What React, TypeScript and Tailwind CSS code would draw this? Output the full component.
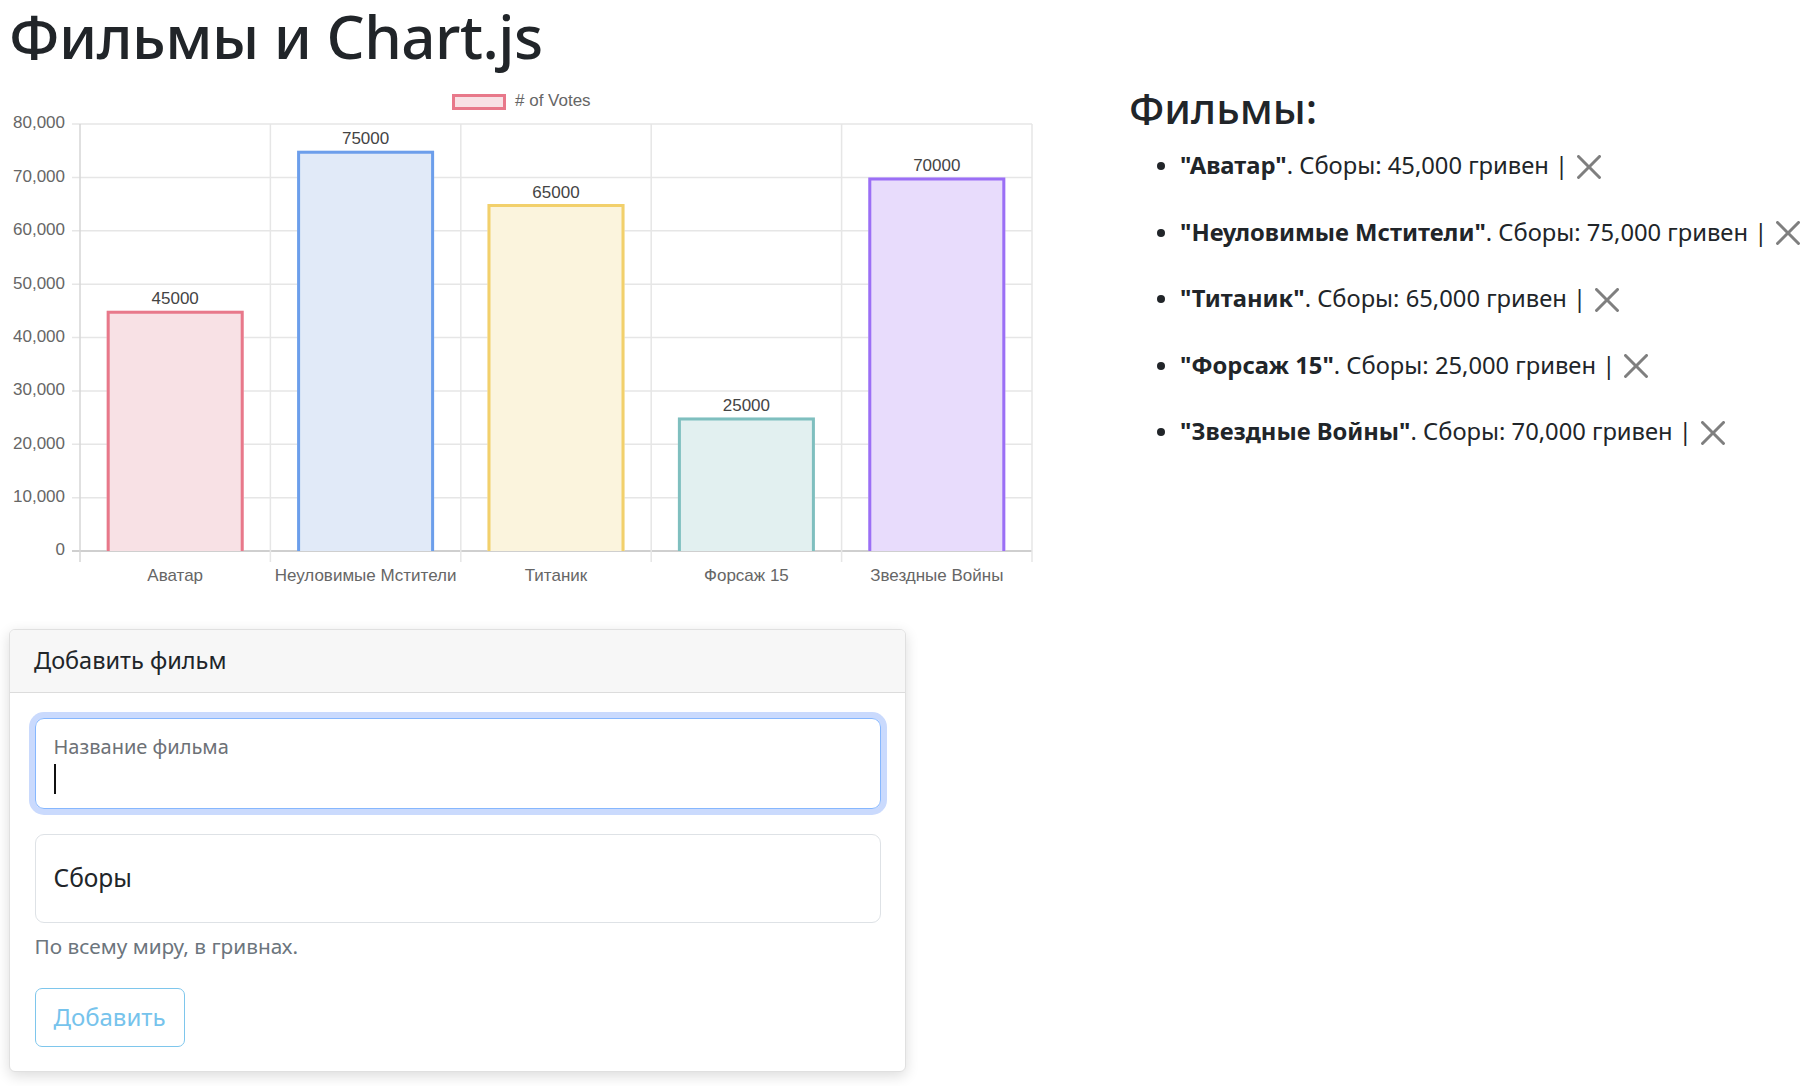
import React from "react";

const SANS = '"Noto Sans", "Open Sans", sans-serif';
const CHART_FONT = '"Liberation Sans", Arial, sans-serif';

const labels = ["Аватар", "Неуловимые Мстители", "Титаник", "Форсаж 15", "Звездные Войны"];
const values = [45000, 75000, 65000, 25000, 70000];
const borders = ["#e8788a", "#6c9eeb", "#f2d06b", "#7fbfbf", "#9b6ff5"];
const fills = ["#f8e1e5", "#e1eaf8", "#fbf4dd", "#e2f0f0", "#e8dcfc"];

function Chart() {
  const l = 80, r = 1032, t = 44, b = 471;
  const cat = (r - l) / 5;
  const step = (b - t) / 8;
  const barW = 137;
  return (
    <svg width={1040} height={520} viewBox="0 0 1040 520" className="block" style={{ fontFamily: CHART_FONT }}>
      {/* legend */}
      <rect x={453.5} y={15.5} width={51} height={13} fill={fills[0]} stroke={borders[0]} strokeWidth={3} />
      <text x={515} y={22} fontSize={17} fill="#666" dominantBaseline="middle">
        # of Votes
      </text>
      {/* horizontal grid */}
      {Array.from({ length: 9 }).map((_, k) => {
        const y = t + k * step;
        return (
          <g key={k}>
            <line x1={72} x2={r} y1={y} y2={y} stroke={k === 8 ? "#cfcfcf" : "#e6e6e6"} strokeWidth={k === 8 ? 2 : 1.5} />
            <text x={65} y={y} fontSize={17} fill="#666" textAnchor="end" dominantBaseline="middle">
              {k === 8 ? "0" : `${(8 - k) * 10},000`}
            </text>
          </g>
        );
      })}
      {/* vertical grid */}
      {Array.from({ length: 6 }).map((_, i) => {
        const x = l + i * cat;
        return <line key={i} x1={x} x2={x} y1={t} y2={b + 11} stroke={i === 0 ? "#d6d6d6" : "#e6e6e6"} strokeWidth={1.5} />;
      })}
      {/* bars */}
      {values.map((v, i) => {
        const cx = l + cat * (i + 0.5);
        const x0 = cx - barW / 2;
        const x1 = cx + barW / 2;
        const top = b - (v / 80000) * (b - t);
        return (
          <g key={i}>
            <rect x={x0} y={top} width={barW} height={b - top} fill={fills[i]} />
            <path
              d={`M${x0 + 1.5},${b} L${x0 + 1.5},${top + 1.5} L${x1 - 1.5},${top + 1.5} L${x1 - 1.5},${b}`}
              fill="none"
              stroke={borders[i]}
              strokeWidth={3}
            />
            <text x={cx} y={top - 11} fontSize={17} fill="#444" textAnchor="middle" dominantBaseline="middle">
              {v}
            </text>
            <text x={cx} y={497} fontSize={17} fill="#666" textAnchor="middle" dominantBaseline="middle">
              {labels[i]}
            </text>
          </g>
        );
      })}
    </svg>
  );
}

function CloseIcon() {
  return (
    <svg width={24} height={24} viewBox="0 0 16 16" className="inline-block align-middle ml-[9px] mt-[-2px]">
      <path
        fill="#000"
        fillOpacity={0.5}
        d="M.293.293a1 1 0 0 1 1.414 0L8 6.586 14.293.293a1 1 0 1 1 1.414 1.414L9.414 8l6.293 6.293a1 1 0 0 1-1.414 1.414L8 9.414l-6.293 6.293a1 1 0 0 1-1.414-1.414L6.586 8 .293 1.707a1 1 0 0 1 0-1.414z"
      />
    </svg>
  );
}

const films = [
  ["Аватар", "45,000"],
  ["Неуловимые Мстители", "75,000"],
  ["Титаник", "65,000"],
  ["Форсаж 15", "25,000"],
  ["Звездные Войны", "70,000"],
];

export default function App() {
  return (
    <div className="w-[1812px] h-[1086px] overflow-hidden bg-white flex text-[#212529]" style={{ fontFamily: SANS }}>
      <div className="w-[1129px] shrink-0">
        <h1 className="pl-[9px] h-[72px] text-[60px] leading-[72px] font-medium whitespace-nowrap tracking-[-0.5px]">
          Фильмы и Chart.js
        </h1>
        <div className="mt-[8px]">
          <Chart />
        </div>
        <div className="ml-[9px] mt-[29px] w-[897px] rounded-[6px] border-[1.5px] border-[#e0e0e0] bg-white overflow-hidden shadow-[0_4px_14px_rgba(0,0,0,0.14)]">
          <div className="h-[63px] bg-[#f7f7f7] border-b-[1.5px] border-[#dcdcdc] px-[24px] flex items-center text-[23.5px]">
            Добавить фильм
          </div>
          <div className="p-[24.5px]">
            <div className="h-[91px] rounded-[9px] border-[1.5px] border-[#86b7fe] shadow-[0_0_0_6px_#cadafd] px-[18px] pt-[14px]">
              <div className="text-[20px] leading-[28px] text-[#6d7176]">Название фильма</div>
              <div className="mt-[3px] w-[2px] h-[30px] bg-[#111]" />
            </div>
            <div className="mt-[25px] h-[89px] rounded-[9px] border-[1.5px] border-[#dee2e6] px-[18px] flex items-center text-[24.5px]">
              Сборы
            </div>
            <div className="mt-[8px] text-[20.8px] leading-[30px] text-[#6c757d]">По всему миру, в гривнах.</div>
            <div className="mt-[27px] w-[150px] flex justify-center items-center h-[59px] rounded-[7px] border-[1.5px] border-[#7ec6ec] text-[#76c3ec] text-[24px]">
              Добавить
            </div>
          </div>
        </div>
      </div>
      <div className="flex-1 pt-[80px]">
        <h2 className="text-[42px] leading-[56px] font-medium">Фильмы:</h2>
        <ul className="list-disc pl-[51px] mt-[-4px] text-[23.75px]">
          {films.map(([name, sum]) => (
            <li key={name} className="h-[66.5px] leading-[66.5px] whitespace-nowrap">
              <b className="font-bold">"{name}"</b>. Сборы: {sum} гривен |
              <CloseIcon />
            </li>
          ))}
        </ul>
      </div>
    </div>
  );
}
